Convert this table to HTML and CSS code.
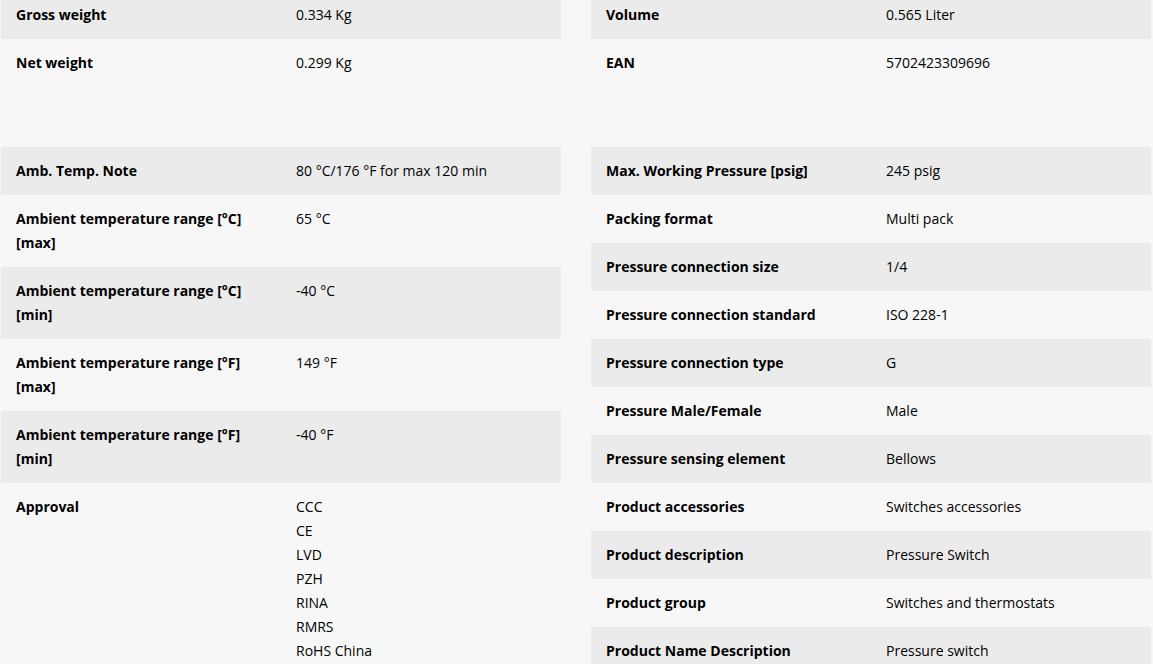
FILE: index.html
```html
<!DOCTYPE html>
<html lang="en">
<head>
<meta charset="utf-8">
<title>Specifications</title>
<link rel="stylesheet" href="styles.css">
</head>
<body>
<div class="page">
  <section class="group">
    <div class="col">
      <div class="row"><div class="label">Gross weight</div><div class="value">0.334 Kg</div></div>
      <div class="row"><div class="label">Net weight</div><div class="value">0.299 Kg</div></div>
    </div>
    <div class="col">
      <div class="row"><div class="label">Volume</div><div class="value">0.565 Liter</div></div>
      <div class="row"><div class="label">EAN</div><div class="value">5702423309696</div></div>
    </div>
  </section>
  <section class="group">
    <div class="col">
      <div class="row"><div class="label">Amb. Temp. Note</div><div class="value">80 °C/176 °F for max 120 min</div></div>
      <div class="row"><div class="label">Ambient temperature range [°C] [max]</div><div class="value">65 °C</div></div>
      <div class="row"><div class="label">Ambient temperature range [°C] [min]</div><div class="value">-40 °C</div></div>
      <div class="row"><div class="label">Ambient temperature range [°F] [max]</div><div class="value">149 °F</div></div>
      <div class="row"><div class="label">Ambient temperature range [°F] [min]</div><div class="value">-40 °F</div></div>
      <div class="row"><div class="label">Approval</div>
        <div class="value">
          <div>CCC</div><div>CE</div><div>LVD</div><div>PZH</div><div>RINA</div><div>RMRS</div><div>RoHS China</div>
        </div>
      </div>
    </div>
    <div class="col">
      <div class="row"><div class="label">Max. Working Pressure [psig]</div><div class="value">245 psig</div></div>
      <div class="row"><div class="label">Packing format</div><div class="value">Multi pack</div></div>
      <div class="row"><div class="label">Pressure connection size</div><div class="value">1/4</div></div>
      <div class="row"><div class="label">Pressure connection standard</div><div class="value">ISO 228-1</div></div>
      <div class="row"><div class="label">Pressure connection type</div><div class="value">G</div></div>
      <div class="row"><div class="label">Pressure Male/Female</div><div class="value">Male</div></div>
      <div class="row"><div class="label">Pressure sensing element</div><div class="value">Bellows</div></div>
      <div class="row"><div class="label">Product accessories</div><div class="value">Switches accessories</div></div>
      <div class="row"><div class="label">Product description</div><div class="value">Pressure Switch</div></div>
      <div class="row"><div class="label">Product group</div><div class="value">Switches and thermostats</div></div>
      <div class="row"><div class="label">Product Name Description</div><div class="value">Pressure switch</div></div>
    </div>
  </section>
</div>
</body>
</html>
```

FILE: styles.css
```css
html, body {
  margin: 0;
  padding: 0;
  background: #f7f7f7;
}
body {
  font-family: "Open Sans", "Liberation Sans", sans-serif;
  font-size: 14px;
  line-height: 24px;
  color: #000;
  overflow: hidden;
}
.page {
  display: flex;
  flex-direction: column;
  gap: 60px;
  margin-top: -9px;
  padding-left: 1px;
  width: 1151px;
}
.group {
  display: flex;
  gap: 30px;
  align-items: flex-start;
}
.col {
  width: 560px;
  display: flex;
  flex-direction: column;
}
.row {
  display: flex;
  padding: 12px 0;
}
.col .row:nth-child(odd) {
  background: #ebebeb;
}
.label {
  width: 250px;
  padding: 0 30px 0 15px;
  font-weight: 700;
  flex: none;
}
.value {
  flex: 1;
  padding-right: 15px;
}
```
